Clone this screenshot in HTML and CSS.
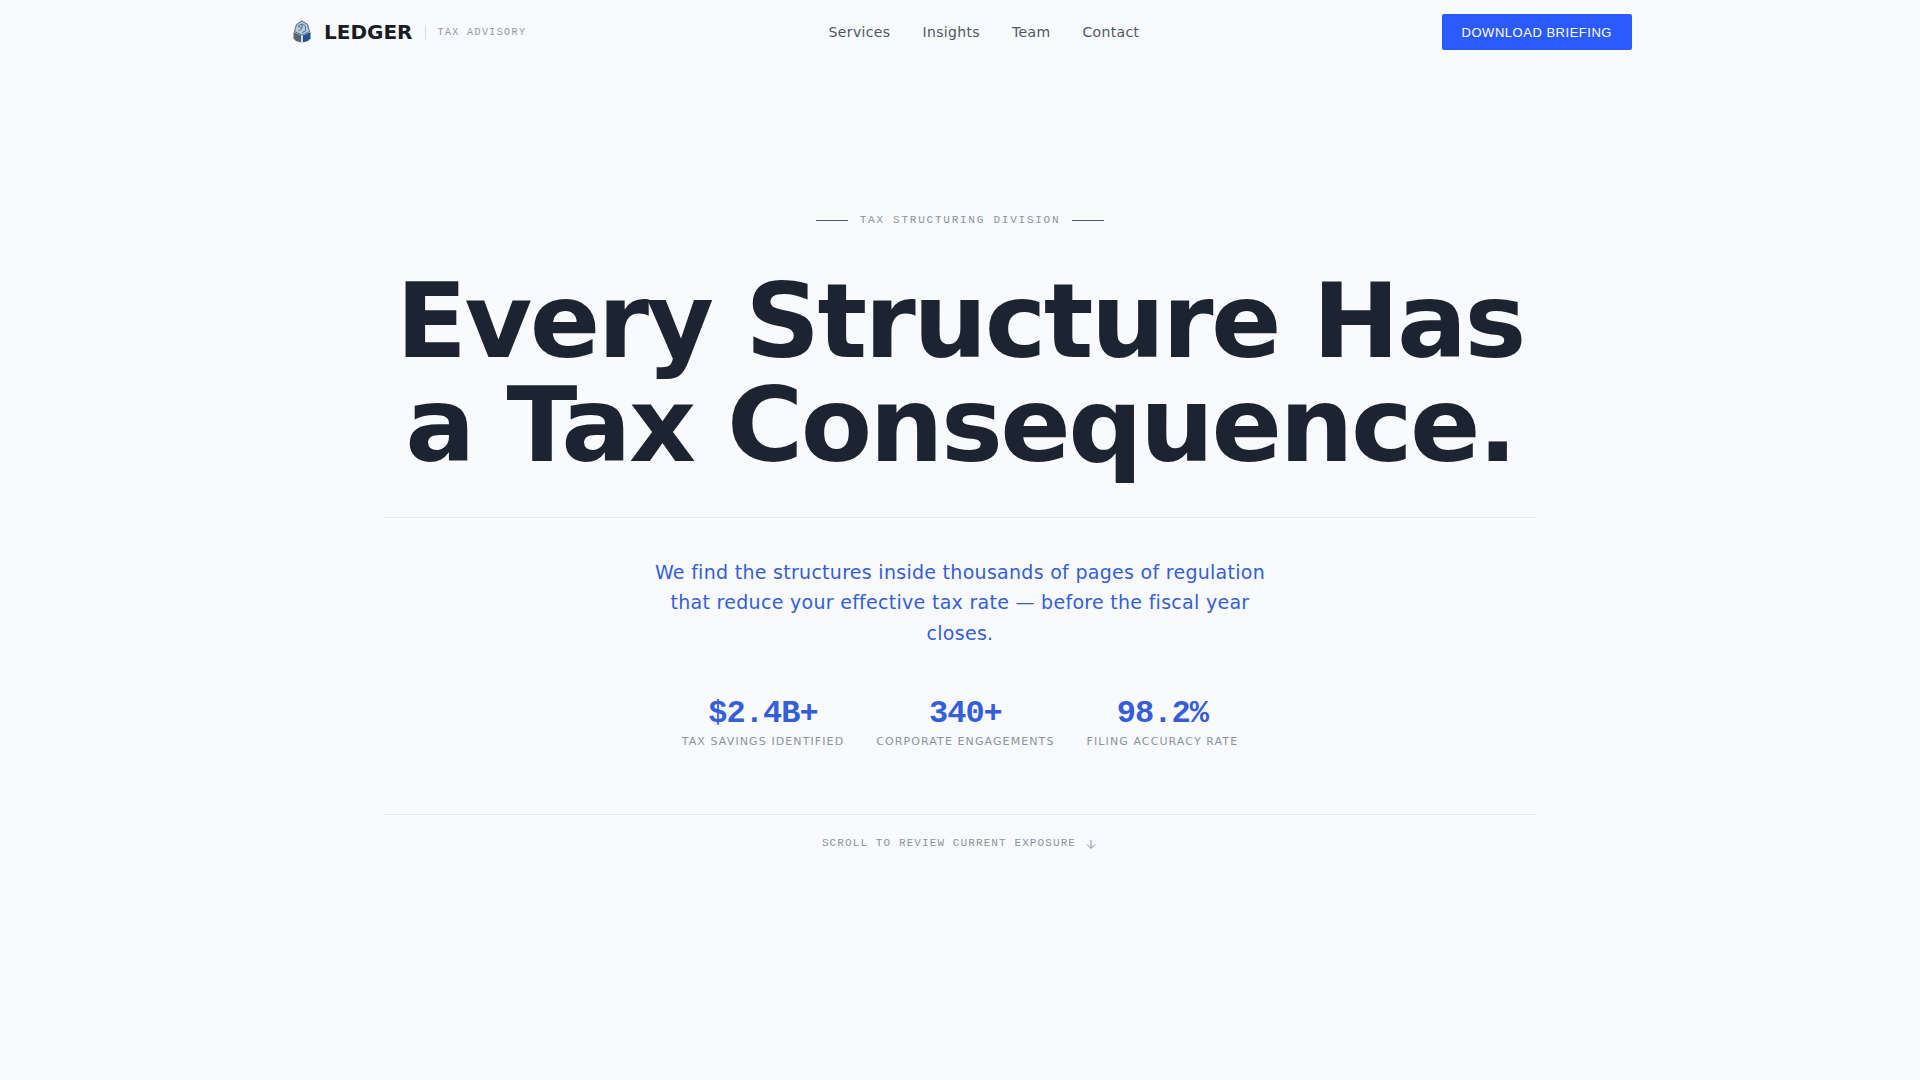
FILE: index.html
```html
<!DOCTYPE html>
<html lang="en">
<head>
    <meta charset="UTF-8">
    <meta name="viewport" content="width=device-width, initial-scale=1">
    <title>Ledger - Tax Advisory</title>
    <link rel="stylesheet" href="styles.css">
</head>
<body>
<header>
    <div class="bar">
        <div class="brand">
            <a class="logo" href="#">
                <svg width="28" height="28" viewBox="0 0 28 28" aria-hidden="true">
                    <path d="M14 2.500L20 6L22 14L14 17.500L6 14L8 6Z" fill="#b9c9d8"/>
                    <path d="M5.500 14L13.300 17.500V24.500L8 23L5.500 20.500Z" fill="#5b6570"/>
                    <path d="M22.500 14L14.700 17.500V24.500L20 23L22.500 20.500Z" fill="#24538f"/>
                    <path d="M14 3L8.500 6.500L6.500 13.500L14 17L21.500 13.500L19.500 6.500Z" fill="none" stroke="#557492" stroke-width="1"/>
                    <path d="M10 8L14 6L17 7.500M10 8L14 10.500L10.500 13M14 14.500L17.500 13V8M14 6V10" fill="none" stroke="#4d7199" stroke-width="1"/>
                    <path d="M14 18V24.500" stroke="#d5dde6" stroke-width="1.500"/>
                </svg>
                <span>LEDGER</span>
            </a>
            <span class="tag">TAX ADVISORY</span>
        </div>
        <nav>
            <a href="#services">Services</a>
            <a href="#insights">Insights</a>
            <a href="#team">Team</a>
            <a href="#contact">Contact</a>
        </nav>
        <button type="button">DOWNLOAD BRIEFING</button>
    </div>
</header>
<main>
    <p class="eyebrow">TAX STRUCTURING DIVISION</p>
    <h1>Every Structure Has a&nbsp;Tax Consequence.</h1>
    <hr>
    <p class="lead">We find the structures inside thousands of pages of regulation that reduce your effective tax rate — before the fiscal year closes.</p>
    <ul class="stats">
        <li><strong>$2.4B+</strong><span>TAX SAVINGS IDENTIFIED</span></li>
        <li><strong>340+</strong><span>CORPORATE ENGAGEMENTS</span></li>
        <li><strong>98.2%</strong><span>FILING ACCURACY RATE</span></li>
    </ul>
    <hr>
    <a class="scroll" href="#services">
        SCROLL TO REVIEW CURRENT EXPOSURE
        <svg width="14" height="14" viewBox="0 0 14 14" fill="none" stroke="currentColor" aria-hidden="true">
            <path d="M7 4V12M3 8.500L7 12.500L11 8.500"/>
        </svg>
    </a>
</main>
</body>
</html>
```
FILE: styles.css
```css
* {
    box-sizing: border-box;
    margin: 0;
    padding: 0;
}

body {
    background: #f8fafd;
    color: #1c2331;
    font-family: "DejaVu Sans", sans-serif;
}

a {
    color: inherit;
    text-decoration: none;
}

.bar {
    max-width: 1440px;
    height: 64px;
    margin: 0 auto;
    padding: 0 48px;
    display: flex;
    align-items: center;
    justify-content: space-between;
}

.brand {
    display: flex;
    align-items: center;
    gap: 12px;
}

.logo {
    display: flex;
    align-items: center;
    gap: 8px;
    color: #171c28;
    font-size: 20px;
    font-weight: 700;
}

.tag {
    padding-left: 12px;
    border-left: 1px solid #d8dce2;
    color: #9098a2;
    font-family: "Liberation Mono", monospace;
    font-size: 10px;
    line-height: 15px;
    letter-spacing: 0.14em;
}

nav {
    display: flex;
    gap: 32px;
    color: #505760;
    font-size: 14px;
    letter-spacing: 0.025em;
}

button {
    height: 36px;
    padding: 0 20px;
    border: 0;
    border-radius: 2px;
    background: #2b5bff;
    color: #fff;
    font-family: "Liberation Sans", sans-serif;
    font-size: 13px;
    letter-spacing: 0.04em;
    cursor: pointer;
}

main {
    max-width: 1152px;
    margin: 0 auto;
    padding: 147px 0 64px;
    text-align: center;
}

.eyebrow {
    display: flex;
    align-items: center;
    justify-content: center;
    gap: 12px;
    color: #8b939c;
    font-family: "Liberation Mono", monospace;
    font-size: 11px;
    line-height: 18px;
    letter-spacing: 0.16em;
}

.eyebrow::before,
.eyebrow::after {
    content: "";
    width: 32px;
    height: 1px;
    background: #3d5a94;
}

h1 {
    margin: 40px 0;
    font-size: 104px;
    line-height: 104px;
    letter-spacing: -0.025em;
}

hr {
    border: 0;
    border-top: 1px solid #e3e6ea;
}

.lead {
    max-width: 640px;
    margin: 39px auto 50px;
    color: #345edb;
    font-size: 19px;
    line-height: 1.6;
    letter-spacing: 0.015em;
}

.stats {
    display: flex;
    justify-content: center;
    gap: 32px;
    margin-bottom: 64px;
    list-style: none;
}

.stats strong,
.stats span {
    display: block;
}

.stats strong {
    margin-bottom: 4px;
    color: #345edb;
    font-family: "Liberation Mono", monospace;
    font-size: 32px;
    line-height: 32px;
    letter-spacing: -0.03em;
}

.stats span {
    color: #8b939c;
    font-size: 11px;
    line-height: 16px;
    letter-spacing: 0.1em;
}

.scroll {
    display: inline-flex;
    align-items: center;
    gap: 8px;
    margin-top: 20px;
    color: #8b939c;
    font-family: "Liberation Mono", monospace;
    font-size: 11px;
    line-height: 16px;
    letter-spacing: 0.1em;
}
```
